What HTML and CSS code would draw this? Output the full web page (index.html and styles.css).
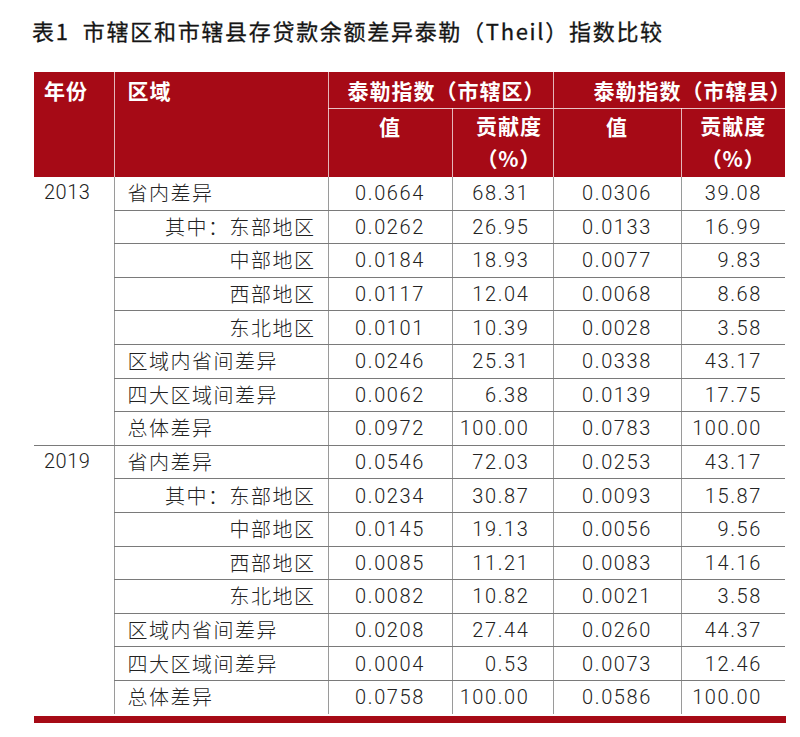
FILE: index.html
```html
<!DOCTYPE html>
<html lang="zh">
<head>
<meta charset="utf-8">
<link rel="stylesheet" href="styles.css">
</head>
<body>
<div class="page">
  <h1 class="title">表1&nbsp;&nbsp;市辖区和市辖县存贷款余额差异泰勒（Theil）指数比较</h1>
  <table class="theil">
    <colgroup>
      <col class="c-year"><col class="c-region"><col class="c-v1"><col class="c-p1"><col class="c-v2"><col class="c-p2">
    </colgroup>
    <thead>
      <tr class="h1">
        <th rowspan="2" class="h-year">年份</th>
        <th rowspan="2" class="h-region">区域</th>
        <th colspan="2" class="h-group g1">泰勒指数（市辖区）</th>
        <th colspan="2" class="h-group g2">泰勒指数（市辖县）</th>
      </tr>
      <tr class="h2">
        <th class="h-val">值</th>
        <th class="h-pct p1">贡献度<br>（%）</th>
        <th class="h-val">值</th>
        <th class="h-pct p2">贡献度<br>（%）</th>
      </tr>
    </thead>
    <tbody class="grp">
      <tr><td rowspan="8" class="year">2013</td><td class="lbl">省内差异</td><td class="v">0.0664</td><td class="p">68.31</td><td class="v">0.0306</td><td class="p">39.08</td></tr>
      <tr><td class="lbl sub">其中：东部地区</td><td class="v">0.0262</td><td class="p">26.95</td><td class="v">0.0133</td><td class="p">16.99</td></tr>
      <tr><td class="lbl sub">中部地区</td><td class="v">0.0184</td><td class="p">18.93</td><td class="v">0.0077</td><td class="p">9.83</td></tr>
      <tr><td class="lbl sub">西部地区</td><td class="v">0.0117</td><td class="p">12.04</td><td class="v">0.0068</td><td class="p">8.68</td></tr>
      <tr><td class="lbl sub">东北地区</td><td class="v">0.0101</td><td class="p">10.39</td><td class="v">0.0028</td><td class="p">3.58</td></tr>
      <tr><td class="lbl">区域内省间差异</td><td class="v">0.0246</td><td class="p">25.31</td><td class="v">0.0338</td><td class="p">43.17</td></tr>
      <tr><td class="lbl">四大区域间差异</td><td class="v">0.0062</td><td class="p">6.38</td><td class="v">0.0139</td><td class="p">17.75</td></tr>
      <tr><td class="lbl">总体差异</td><td class="v">0.0972</td><td class="p">100.00</td><td class="v">0.0783</td><td class="p">100.00</td></tr>
    </tbody>
    <tbody class="grp grp2">
      <tr><td rowspan="8" class="year">2019</td><td class="lbl">省内差异</td><td class="v">0.0546</td><td class="p">72.03</td><td class="v">0.0253</td><td class="p">43.17</td></tr>
      <tr><td class="lbl sub">其中：东部地区</td><td class="v">0.0234</td><td class="p">30.87</td><td class="v">0.0093</td><td class="p">15.87</td></tr>
      <tr><td class="lbl sub">中部地区</td><td class="v">0.0145</td><td class="p">19.13</td><td class="v">0.0056</td><td class="p">9.56</td></tr>
      <tr><td class="lbl sub">西部地区</td><td class="v">0.0085</td><td class="p">11.21</td><td class="v">0.0083</td><td class="p">14.16</td></tr>
      <tr><td class="lbl sub">东北地区</td><td class="v">0.0082</td><td class="p">10.82</td><td class="v">0.0021</td><td class="p">3.58</td></tr>
      <tr><td class="lbl">区域内省间差异</td><td class="v">0.0208</td><td class="p">27.44</td><td class="v">0.0260</td><td class="p">44.37</td></tr>
      <tr><td class="lbl">四大区域间差异</td><td class="v">0.0004</td><td class="p">0.53</td><td class="v">0.0073</td><td class="p">12.46</td></tr>
      <tr><td class="lbl">总体差异</td><td class="v">0.0758</td><td class="p">100.00</td><td class="v">0.0586</td><td class="p">100.00</td></tr>
    </tbody>
  </table>
  <div class="bar"></div>
</div>
</body>
</html>
```

FILE: styles.css
```css
body {
  margin: 0;
  background: #fff;
  font-family: "Noto Sans CJK SC", "Noto Sans", sans-serif;
  color: #222;
}

.page {
  padding: 15px 0 0 34px;
}

.title {
  margin: 0 0 27px -2px;
  font-size: 22px;
  font-weight: 400;
  letter-spacing: 1.7px;
  line-height: 30px;
  color: #151515;
  white-space: nowrap;
  -webkit-text-stroke: 0.3px #151515;
}

.theil {
  border-collapse: collapse;
  table-layout: fixed;
  width: 751px;
}

.c-year { width: 80px; }
.c-region { width: 214px; }
.c-v1 { width: 124px; }
.c-p1 { width: 101px; }
.c-v2 { width: 128px; }
.c-p2 { width: 104px; }

thead th {
  background: #a60a16;
  color: #fff;
  font-size: 21px;
  font-weight: 700;
  letter-spacing: 1px;
  padding: 0;
  text-align: left;
  vertical-align: top;
  white-space: nowrap;
  border-left: 1px solid rgba(255, 255, 255, 0.7);
}

thead .h-year { border-left: none; }

.h1 th { height: 36px; }
.h2 th { height: 68px; }

.h-year {
  padding: 0 0 0 10px !important;
  line-height: 36px;
}

.h-region {
  padding: 0 0 0 13px !important;
  line-height: 36px;
}

.h-group {
  line-height: 36px;
  border-bottom: 1px solid rgba(255, 255, 255, 0.75);
}

.h-group.g1 { padding-left: 19px !important; }
.h-group.g2 { padding-left: 40px !important; }

.h-val {
  text-align: center !important;
  line-height: 34px;
}

.h-pct {
  text-align: center !important;
  line-height: 33px;
}

.h-pct.p1 { padding-left: 18px !important; padding-right: 5px !important; }
.h-pct.p2 { padding-left: 0 !important; padding-right: 0 !important; }

tbody td {
  height: 32.6px;
  padding: 0;
  font-size: 20px;
  font-weight: 300;
  line-height: 1;
  vertical-align: middle;
  color: #222;
  white-space: nowrap;
  border-left: 1px solid #9a9a9a;
  border-bottom: 1px solid #7a7a7a;
}

tbody td.year {
  border-left: none;
  border-bottom: none;
  vertical-align: top;
  padding-left: 10px;
  line-height: 30px;
  font-family: "Roboto", "Noto Sans", sans-serif;
  letter-spacing: 0.5px;
}

.grp2 tr:first-child td {
  border-top: 1px solid #7a7a7a;
}

.grp2 tr:last-child td {
  border-bottom: none;
}

.lbl {
  text-align: left;
  padding-left: 13px !important;
  letter-spacing: 1.5px;
}

.lbl.sub {
  text-align: right;
  padding-left: 0 !important;
  padding-right: 12px !important;
}

.v,
.p {
  font-family: "Roboto", "Noto Sans", sans-serif;
  letter-spacing: 1.6px;
}

.v {
  text-align: center;
}

.p {
  text-align: right;
  padding-right: 23px !important;
}

.bar {
  width: 752px;
  height: 7px;
  margin-top: 2px;
  background: #a60a16;
}
```
